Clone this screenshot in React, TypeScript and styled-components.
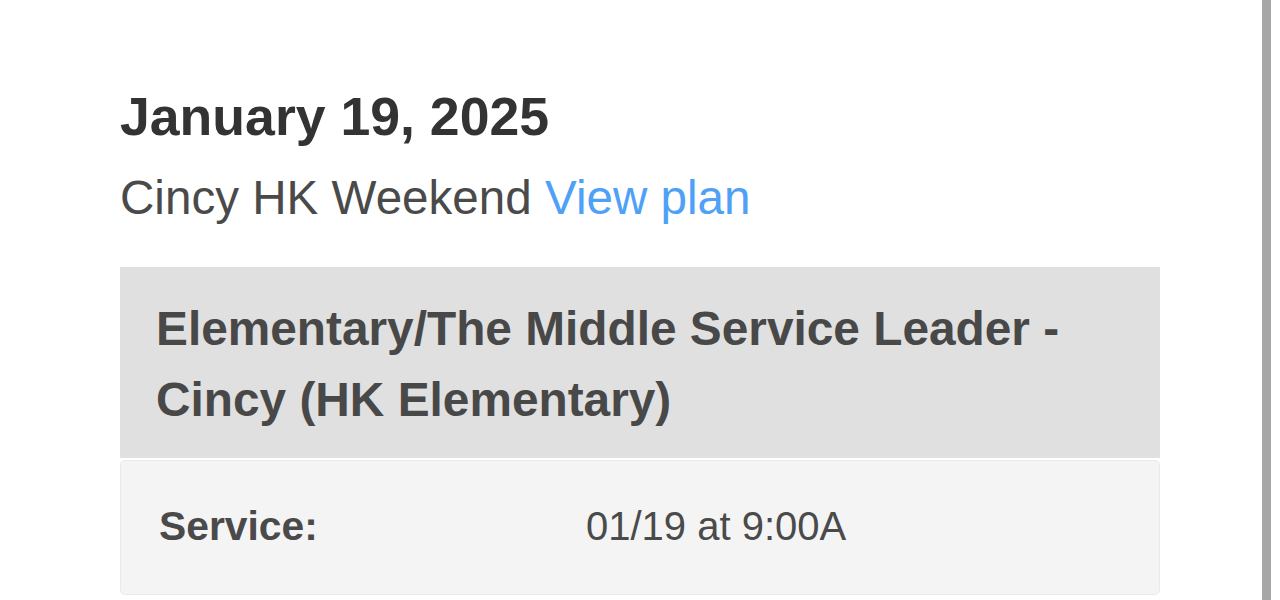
import React from "react";
import styled, { createGlobalStyle } from "styled-components";

const Global = createGlobalStyle`
  html, body { margin: 0; padding: 0; background: #ffffff; }
  body { font-family: "Liberation Sans", Arial, Helvetica, sans-serif; }
  * { box-sizing: border-box; }
`;

const Page = styled.div`
  display: flex;
  height: 600px;
  overflow: hidden;
  background: #ffffff;
`;

const Main = styled.main`
  flex: 1;
  padding: 84px 0 0 120px;
`;

const Column = styled.div`
  width: 1040px;
  display: flex;
  flex-direction: column;
`;

const Rail = styled.div`
  width: 9px;
  margin-right: 9px;
  background: #a6a6a6;
`;

const DateTitle = styled.h1`
  margin: 0;
  font-size: 53.6px;
  line-height: 64px;
  font-weight: 700;
  color: #333333;
`;

const Subtitle = styled.p`
  margin: 22px 0 0;
  font-size: 47.6px;
  line-height: 56px;
  color: #4a4a4a;
`;

const PlanLink = styled.a`
  color: #4ea1f6;
  text-decoration: none;
`;

const RoleHeader = styled.div`
  margin-top: 41px;
  background: #e0e0e0;
  padding: 26px 36px 23px 36px;
  font-size: 47.8px;
  line-height: 71px;
  font-weight: 700;
  color: #484848;
`;

const Details = styled.div`
  margin-top: 2px;
  background: #f4f4f4;
  border: 1px solid #eaeaea;
  border-radius: 5px;
  padding: 41px 38px 44px 38px;
`;

const DetailRow = styled.div`
  display: grid;
  grid-template-columns: 427px 1fr;
  font-size: 40px;
  line-height: 48px;
  color: #4a4a4a;
`;

const Label = styled.span`
  font-weight: 700;
  font-size: 40.8px;
`;

const Value = styled.span`
  font-weight: 400;
`;

export default function App() {
  return (
    <>
      <Global />
      <Page>
        <Main>
          <Column>
            <DateTitle>January 19, 2025</DateTitle>
            <Subtitle>
              Cincy HK Weekend <PlanLink href="#">View plan</PlanLink>
            </Subtitle>
            <RoleHeader>
              Elementary/The Middle Service Leader - Cincy (HK Elementary)
            </RoleHeader>
            <Details>
              <DetailRow>
                <Label>Service:</Label>
                <Value>01/19 at 9:00A</Value>
              </DetailRow>
            </Details>
          </Column>
        </Main>
        <Rail />
      </Page>
    </>
  );
}
